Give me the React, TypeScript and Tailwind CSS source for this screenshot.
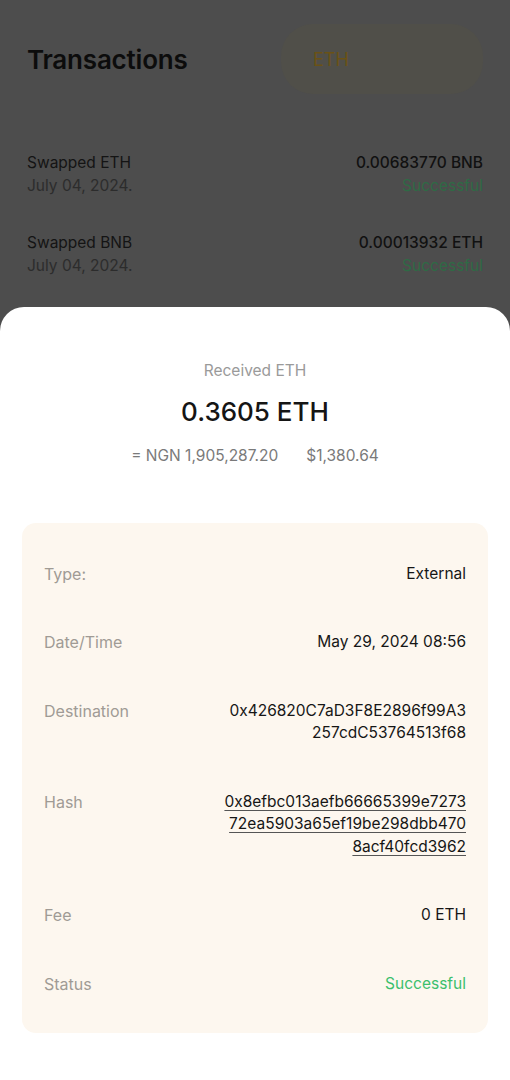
import React from "react"

const font = { fontFamily: "Inter, 'Noto Sans', sans-serif" }

function App() {
   return (
      <div className="flex h-[1080px] w-full flex-col bg-[#4d4d4d]" style={font}>
         <Background/>
         <Sheet/>
      </div>
   )
}

export default App


function Background() {
   return <div className="h-[307px] shrink-0 px-[27px]">
      <div className="flex items-center justify-between pt-6">
         <h1 className="text-[26px] font-semibold tracking-[-0.2px] text-[#0c0c0c]">Transactions</h1>
         <div className="flex h-[70px] w-[202px] items-center rounded-[32px] bg-[#504f49] pl-[32px] text-[18px] text-[#6a5215]">
            ETH
         </div>
      </div>
      <div className="mt-[57px] flex flex-col gap-[34px]">
         <TxRow title="Swapped ETH" date="July 04, 2024." amount="0.00683770 BNB"/>
         <TxRow title="Swapped BNB" date="July 04, 2024." amount="0.00013932 ETH"/>
      </div>
   </div>
}

function TxRow(props: { title: string, date: string, amount: string }) {
   return <div className="flex justify-between text-[15.5px] leading-[23px]">
      <div>
         <div className="text-[#141414]">{props.title}</div>
         <div className="text-[#2c2c2c]">{props.date}</div>
      </div>
      <div className="text-right">
         <div className="font-medium text-[#111111]">{props.amount}</div>
         <div className="text-[#2f6a45]">Successful</div>
      </div>
   </div>
}

function Sheet() {
   return <div className="flex-1 rounded-t-[24px] bg-white px-[22px] pt-[52px]">
      <div className="flex flex-col items-center">
         <div className="text-[15.5px] text-[#9a9a9a]">Received ETH</div>
         <div className="mt-[10px] text-[26px] font-medium text-[#151515]">0.3605 ETH</div>
         <div className="mt-[13px] flex gap-7 text-[15.5px] text-[#7a7a7a]">
            <span>= NGN 1,905,287.20</span>
            <span>$1,380.64</span>
         </div>
      </div>
      <div className="mt-[55px] flex flex-col gap-[46px] rounded-[14px] bg-[#fdf7ef] px-[22px] pt-[40px] pb-[38px] text-[15.5px] leading-[22.5px]">
         <Detail label="Type:">External</Detail>
         <Detail label="Date/Time">May 29, 2024 08:56</Detail>
         <Detail label="Destination">
            0x426820C7aD3F8E2896f99A3<br/>257cdC53764513f68
         </Detail>
         <Detail label="Hash">
            <span className="underline decoration-[#555] underline-offset-[3px]">
               0x8efbc013aefb66665399e7273<br/>72ea5903a65ef19be298dbb470<br/>8acf40fcd3962
            </span>
         </Detail>
         <Detail label="Fee">0 ETH</Detail>
         <Detail label="Status"><span className="text-[#3cbf6c]">Successful</span></Detail>
      </div>
   </div>
}

function Detail(props: { label: string, children: React.ReactNode }) {
   return <div className="flex items-start justify-between">
      <div className="text-[16px] text-[#a09b95]">{props.label}</div>
      <div className="text-right text-[#161616]">{props.children}</div>
   </div>
}
